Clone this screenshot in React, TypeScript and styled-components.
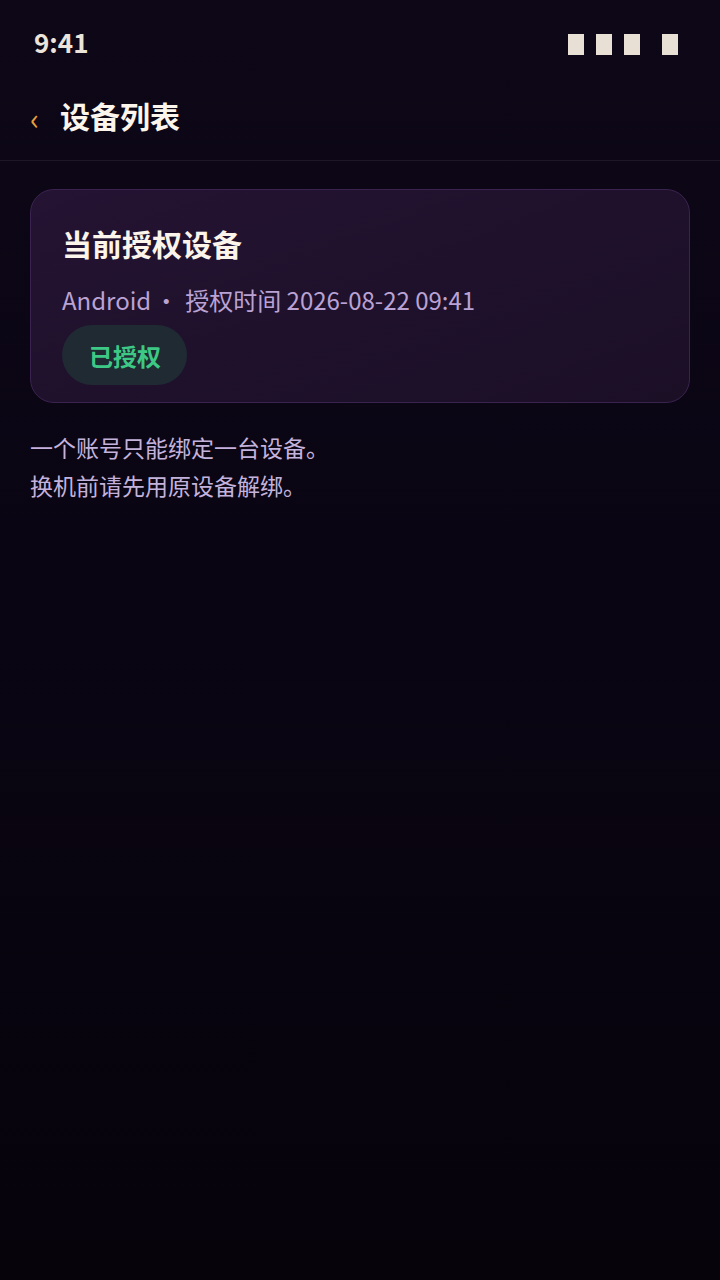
import React from "react";
import styled, { createGlobalStyle } from "styled-components";

const GlobalStyle = createGlobalStyle`
  html, body {
    margin: 0;
    padding: 0;
    background: #08040f;
  }
  body {
    font-family: "Noto Sans CJK SC", "Noto Sans", sans-serif;
    -webkit-font-smoothing: antialiased;
  }
`;

const Screen = styled.div`
  width: 720px;
  min-height: 1280px;
  background: linear-gradient(180deg, #0d0717 0%, #0a0513 45%, #06030b 100%);
  display: flex;
  flex-direction: column;
`;

const StatusBar = styled.div`
  height: 87px;
  padding: 0 42px 0 34px;
  display: flex;
  align-items: center;
  justify-content: space-between;
  box-sizing: border-box;
`;

const Time = styled.span`
  font-size: 26px;
  font-weight: 700;
  color: #ebe4da;
  line-height: 1;
  margin-top: -3px;
`;

const Indicators = styled.div`
  display: flex;
  align-items: center;
  gap: 12px;
  margin-top: 1px;
`;

const Block = styled.span<{ $gapBefore?: number }>`
  width: 16px;
  height: 21px;
  background: #e8e0d4;
  margin-left: ${({ $gapBefore }) => ($gapBefore ? `${$gapBefore}px` : "0")};
`;

const Header = styled.div`
  height: 74px;
  padding: 0 30px 18px 30px;
  box-sizing: border-box;
  display: flex;
  align-items: center;
  border-bottom: 1px solid #1d1727;
`;

const Back = styled.span`
  font-size: 30px;
  line-height: 1;
  color: #e6a23c;
  width: 30px;
  margin-top: 4px;
`;

const Title = styled.h1`
  margin: 0;
  font-size: 30px;
  font-weight: 700;
  color: #fbf5ec;
  line-height: 1.4;
`;

const Content = styled.main`
  padding: 28px 30px 0;
  display: flex;
  flex-direction: column;
`;

const Card = styled.section`
  border: 1px solid #3a2350;
  border-radius: 24px;
  background: linear-gradient(160deg, #241332 0%, #1f112c 50%, #1b0f26 100%);
  padding: 32px 30px 17px 31px;
  display: flex;
  flex-direction: column;
  align-items: flex-start;
`;

const CardTitle = styled.h2`
  margin: 0;
  font-size: 30px;
  font-weight: 700;
  line-height: 42px;
  color: #fbf4ea;
`;

const Meta = styled.div`
  margin-top: 20px;
  font-size: 24px;
  line-height: 32px;
  color: #baa3d4;
  display: flex;
  align-items: center;
`;

const Dot = styled.span`
  margin: 0 7px 0 3px;
`;

const Badge = styled.span`
  margin-top: 9px;
  height: 60px;
  padding: 0 26px 0 27px;
  border-radius: 30px;
  background: #1f2a33;
  color: #3dc985;
  font-size: 24px;
  font-weight: 700;
  display: inline-flex;
  align-items: center;
`;

const Note = styled.p`
  margin: 25px 0 0;
  font-size: 23px;
  line-height: 38px;
  color: #c3b3dc;
`;

export default function App() {
  return (
    <>
      <GlobalStyle />
      <Screen>
        <StatusBar>
          <Time>9:41</Time>
          <Indicators>
            <Block />
            <Block />
            <Block />
            <Block $gapBefore={10} />
          </Indicators>
        </StatusBar>
        <Header>
          <Back>‹</Back>
          <Title>设备列表</Title>
        </Header>
        <Content>
          <Card>
            <CardTitle>当前授权设备</CardTitle>
            <Meta>
              <span>Android</span>
              <Dot>·</Dot>
              <span>授权时间 2026-08-22 09:41</span>
            </Meta>
            <Badge>已授权</Badge>
          </Card>
          <Note>
            一个账号只能绑定一台设备。
            <br />
            换机前请先用原设备解绑。
          </Note>
        </Content>
      </Screen>
    </>
  );
}
